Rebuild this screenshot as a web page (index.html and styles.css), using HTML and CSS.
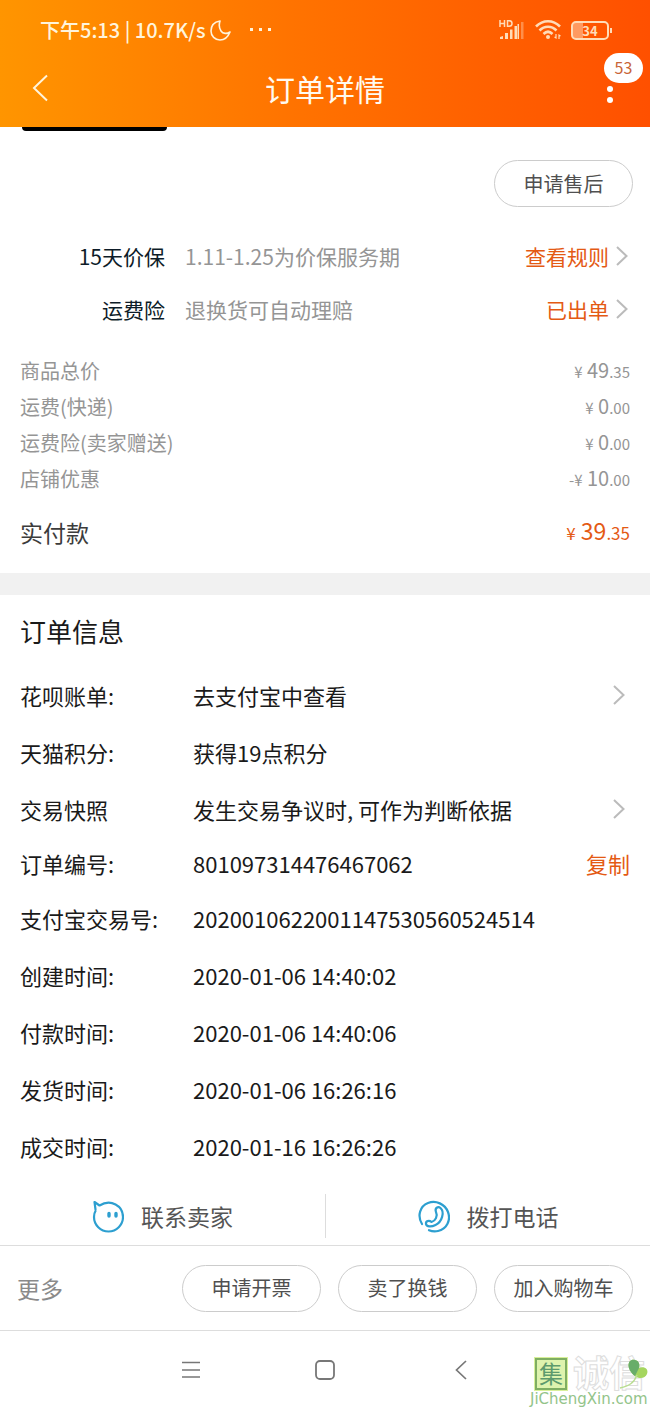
FILE: index.html
```html
<!DOCTYPE html>
<html lang="zh-CN">
<head>
<meta charset="utf-8">
<meta name="viewport" content="width=device-width, initial-scale=1">
<title>订单详情</title>
<link rel="stylesheet" href="styles.css">
</head>
<body>
<header class="top">
  <div class="status">
    <span class="status-text">下午5:13 | 10.7K/s</span>
    <svg class="moon" width="21" height="22" viewBox="0 0 21 22" fill="none" stroke="currentColor" stroke-width="1.6" stroke-linejoin="round"><path d="M10 2C4 3 1 7 1 12c0 5 4 9 9 9 5 0 8-3 10-8-3 2-7 2-9-1-2-3-2-7-1-10z"/></svg>
    <svg class="more-dots" width="24" height="4" viewBox="0 0 24 4" fill="currentColor"><rect x="1" y="0" width="3" height="3"/><rect x="10" y="0" width="3" height="3"/><rect x="19" y="0" width="3" height="3"/></svg>
    <span class="status-icons">
      <svg width="26" height="20" viewBox="0 0 26 20" fill="currentColor"><path d="M1 0v7M5.500 0v7M1 3.500h4.500M8.500.7v5.600h1.500q3 0 3-2.800t-3-2.800z" fill="none" stroke="currentColor" stroke-width="1.500"/><path d="M1 19v-2l3-1v3zM6 13h3v6H6zM11 9.500h2.500V19H11zM15.500 6h2.500v13h-2.500z"/><path d="M18.500 4h1.500v15h-1.500z"/><path opacity=".4" d="M22 2h2.500v17H22z"/></svg>
      <svg width="26" height="22" viewBox="0 0 26 22" fill="none" stroke="currentColor" stroke-width="2.600"><path d="M1 7.500C8 .5 18 .5 25 7.500M4.500 11.500c5-5 12-5 17 0M8.500 15c3-3 6-3 9 0"/><circle cx="13" cy="18" r="2" fill="currentColor" stroke="none"/><path d="M21 15v4l-1.500-1M24 20v-4l1.500 1" stroke-width="1.200"/></svg>
      <span class="battery">34</span>
    </span>
  </div>
  <div class="titlebar">
    <button class="back" aria-label="返回"><svg width="16" height="28" viewBox="0 0 16 28" fill="none" stroke="currentColor" stroke-width="2"><path d="M15 1.500L2 14l13 12.500"/></svg></button>
    <h1>订单详情</h1>
    <button class="menu" aria-label="更多选项"><i></i><i></i><b class="badge">53</b></button>
  </div>
</header>

<main>
  <section class="goods">
    <div class="thumb"></div>
    <button class="pill">申请售后</button>
  </section>

  <section class="services">
    <div class="service"><strong>15天价保</strong><span>1.11-1.25为价保服务期</span><a href="#">查看规则<svg class="chev" viewBox="0 0 12 22"><path d="M1 2l9.500 9L1 20"/></svg></a></div>
    <div class="service"><strong>运费险</strong><span>退换货可自动理赔</span><a href="#">已出单<svg class="chev" viewBox="0 0 12 22"><path d="M1 2l9.500 9L1 20"/></svg></a></div>
  </section>

  <dl class="prices">
    <div><dt>商品总价</dt><dd><small>¥</small> 49<small>.35</small></dd></div>
    <div><dt>运费(快递)</dt><dd><small>¥</small> 0<small>.00</small></dd></div>
    <div><dt>运费险(卖家赠送)</dt><dd><small>¥</small> 0<small>.00</small></dd></div>
    <div><dt>店铺优惠</dt><dd><small>-¥</small> 10<small>.00</small></dd></div>
    <div class="paid"><dt>实付款</dt><dd><small>¥</small> 39<small>.35</small></dd></div>
  </dl>

  <section class="info">
    <h2>订单信息</h2>
    <dl>
      <div><dt>花呗账单:</dt><dd>去支付宝中查看</dd><svg class="chev" viewBox="0 0 12 22"><path d="M1 2l9.500 9L1 20"/></svg></div>
      <div><dt>天猫积分:</dt><dd>获得19点积分</dd></div>
      <div><dt>交易快照</dt><dd>发生交易争议时, 可作为判断依据</dd><svg class="chev" viewBox="0 0 12 22"><path d="M1 2l9.500 9L1 20"/></svg></div>
      <div class="number"><dt>订单编号:</dt><dd>801097314476467062</dd><button class="copy">复制</button></div>
      <div><dt>支付宝交易号:</dt><dd>2020010622001147530560524514</dd></div>
      <div><dt>创建时间:</dt><dd>2020-01-06 14:40:02</dd></div>
      <div><dt>付款时间:</dt><dd>2020-01-06 14:40:06</dd></div>
      <div><dt>发货时间:</dt><dd>2020-01-06 16:26:16</dd></div>
      <div><dt>成交时间:</dt><dd>2020-01-16 16:26:26</dd></div>
    </dl>
  </section>

  <section class="contact">
    <button><svg width="32" height="33" viewBox="0 0 32 33" fill="none" stroke="#2d9fd0" stroke-width="2.200" stroke-linecap="round" stroke-linejoin="round"><path d="M3.500 9.500L2.500 2l5 3.500C19-1.500 31 6 31 17c0 8-6.500 14.500-14.500 14.500S2 25 2 17c0-2.500.5-4.500 1.500-6"/><path d="M17 13.500v2.500M24 13.500v2.500" stroke-width="3.400"/></svg>联系卖家</button>
    <button><svg width="32" height="33" viewBox="0 0 32 33" fill="none" stroke="#2d9fd0" stroke-width="2.200" stroke-linecap="round" stroke-linejoin="round"><path d="M4 24C-1 16 2 6 10 3c8-3 17 1 20 9s-1 17-10 19c-3 .8-6 .5-9-.8"/><path d="M18 12c-1.500-4 2-6 4.500-4 4.500 4 1.500 14-5 17-4 2-9 2-9.500-1-.5-3 3-4 5.500-2 4-1 6.500-6 4.500-10z"/></svg>拨打电话</button>
  </section>
</main>

<footer>
  <div class="actions">
    <button class="more">更多</button>
    <button class="pill">申请开票</button>
    <button class="pill">卖了换钱</button>
    <button class="pill">加入购物车</button>
  </div>
  <nav class="sysnav">
    <button aria-label="菜单"><svg width="20" height="20" viewBox="0 0 20 20" fill="none" stroke="currentColor" stroke-width="1.600"><path d="M1 2.500h18M1 10h18M1 17h18"/></svg></button>
    <button aria-label="主页"><svg width="20" height="20" viewBox="0 0 20 20" fill="none" stroke="currentColor" stroke-width="1.800"><rect x="1" y="1" width="18" height="18" rx="4"/></svg></button>
    <button aria-label="后退"><svg width="20" height="20" viewBox="0 0 20 20" fill="none" stroke="currentColor" stroke-width="1.700"><path d="M17 1L7.500 10l9.500 9"/></svg></button>
    <div class="mark">
      <div class="mark-row"><span class="mark-seal">集</span><span class="mark-name">诚信</span></div>
      <span class="mark-site">JiChengXin.com</span>
      <svg class="leaf" width="32" height="32" viewBox="0 0 32 32"><path d="M17 18C7 10 10 0 17 2c4 1 5 4 4 8 5-2 10 1 8 6-2 5-8 5-12 2z" fill="#a5d65f"/><path d="M17 18C7 10 10 0 17 2c4 1 5 4 4 8z" fill="#68ad69"/><path d="M19 17c-3 8-8 11-17 13" fill="none" stroke="#b9de91" stroke-width="1.500"/></svg>
    </div>
  </nav>
</footer>
</body>
</html>
```
FILE: styles.css
```css
* { box-sizing: border-box; }

body {
  margin: 0;
  background: #fff;
  color: #1a1a1a;
  font: 22px/32px "Noto Sans CJK SC", sans-serif;
}

h1, h2, dl, dd { margin: 0; font-weight: 400; }

button {
  padding: 0;
  border: 0;
  background: none;
  color: inherit;
  font: inherit;
}

svg { display: block; flex: none; }

.top {
  background: linear-gradient(90deg, #ff9500, #ff7300 45%, #ff5000);
  color: #fff4dc;
}

.status {
  display: flex;
  align-items: center;
  height: 60px;
  padding: 0 38px 0 40px;
}

.status-text { font-size: 20px; font-weight: 500; }
.moon { margin-left: 4px; }
.more-dots { margin-left: 18px; }

.status-icons {
  display: flex;
  align-items: center;
  gap: 10px;
  margin-left: auto;
  color: #ffdcb8;
}

.battery {
  position: relative;
  width: 38px;
  height: 19px;
  margin-right: 3px;
  border: 2px solid;
  border-radius: 5px;
  background: linear-gradient(90deg, #ff9a60 30%, transparent 30%);
  font-size: 13px;
  line-height: 15px;
  font-weight: 700;
  text-align: center;
}

.battery::after {
  content: "";
  position: absolute;
  right: -5px;
  top: 5px;
  width: 2px;
  height: 5px;
  background: currentColor;
}

.titlebar {
  display: grid;
  grid-template-columns: 1fr auto 1fr;
  align-items: center;
  height: 67px;
  padding: 0 32px 12px;
}

.titlebar h1 { font-size: 30px; line-height: 40px; color: #fffaf0; }

.menu {
  position: relative;
  display: grid;
  gap: 5px;
  justify-self: end;
  margin-right: 5px;
  padding-top: 13px;
}

.menu i { width: 6px; height: 6px; border-radius: 50%; background: #fff; }

.badge {
  position: absolute;
  left: -3px;
  top: -20px;
  width: 39px;
  height: 30px;
  border-radius: 15px;
  background: #fff;
  color: #c86537;
  font-size: 16px;
  line-height: 29px;
  font-weight: 400;
}

.goods {
  display: flex;
  flex-direction: column;
  align-items: flex-end;
  padding: 0 17px 22px 22px;
}

.thumb {
  align-self: flex-start;
  width: 145px;
  height: 4px;
  margin-bottom: 29px;
  border-radius: 0 0 8px 8px;
  background: #000;
}

.pill {
  width: 139px;
  height: 47px;
  border: 1px solid #ccc;
  border-radius: 24px;
  background: #fff;
  color: #505050;
  font-size: 20px;
}

.service {
  display: grid;
  grid-template-columns: 165px 1fr auto;
  align-items: center;
  column-gap: 20px;
  height: 53px;
  padding-right: 22px;
  font-size: 21px;
}

.service strong { color: #0d1c28; font-weight: 400; text-align: right; }
.service span { color: #959595; }

.service a {
  display: flex;
  align-items: center;
  gap: 7px;
  color: #e45a14;
  text-decoration: none;
}

.chev { width: 12px; height: 22px; fill: none; stroke: #bbb; stroke-width: 2; }

.prices { padding: 18px 20px 16px; color: #959595; font-size: 20px; }

.prices > div {
  display: flex;
  align-items: center;
  justify-content: space-between;
  height: 36px;
}

.prices small { font-size: 15px; }
.prices .paid { height: 51px; margin-top: 9px; color: #3c3c3c; font-size: 23px; }
.prices .paid dd { color: #e45a14; }
.prices .paid small { font-size: 17px; }

.info {
  padding: 18px 20px 0;
  border-top: 22px solid #f1f1f1;
}

.info h2 { height: 53px; font-size: 26px; line-height: 36px; }

.info dl > div {
  display: grid;
  grid-template-columns: 173px 1fr auto;
  align-items: center;
  height: 57px;
}

.info dl > .number { height: 52px; }
.info .chev { margin-right: 5px; }
.copy { color: #e45a14; }

.contact {
  display: grid;
  grid-template-columns: 1fr 1fr;
  padding: 20px 0 7px;
}

.contact button {
  display: flex;
  align-items: center;
  justify-content: center;
  gap: 17px;
  height: 44px;
  color: #555;
  font-size: 23px;
}

.contact button + button { border-left: 1px solid #ddd; }

.actions {
  display: flex;
  align-items: center;
  gap: 17px;
  height: 86px;
  padding: 0 17px;
  border: solid #ddd;
  border-width: 1px 0;
}

.more { margin-right: auto; color: #8a8a8a; font-size: 23px; }

.sysnav {
  position: relative;
  display: flex;
  justify-content: center;
  gap: 114px;
  height: 77px;
  color: #777;
}

.mark {
  position: absolute;
  right: 0;
  bottom: 0;
  width: 120px;
}

.mark-row { display: flex; gap: 6px; padding-left: 5px; }

.mark-seal {
  width: 32px;
  height: 32px;
  border: 2px solid #7fae62;
  outline: 1px solid #d8f09a;
  background: #def3ae;
  color: #5d9a6d;
  font-size: 24px;
  line-height: 26px;
  text-align: center;
}

.mark-name {
  color: #fff;
  font-size: 36px;
  line-height: 26px;
  font-weight: 700;
  -webkit-text-stroke: 1px #ddd;
}

.mark-site {
  display: block;
  color: #93c48a;
  font: 15px/18px "DejaVu Sans", sans-serif;
}

.leaf { position: absolute; right: 0; top: 0; }
```
